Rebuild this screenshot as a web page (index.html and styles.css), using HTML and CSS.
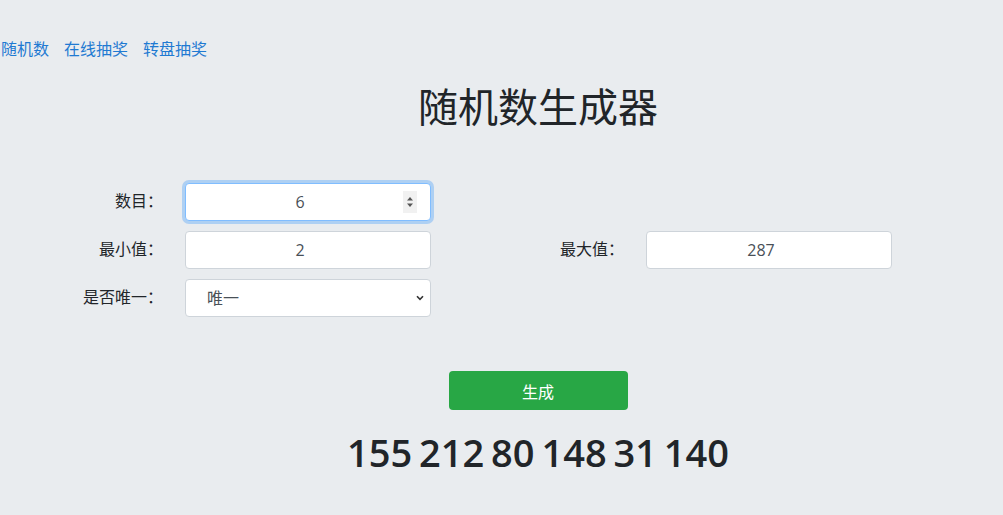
FILE: index.html
```html
<!DOCTYPE html>
<html lang="zh-CN">
<head>
<meta charset="utf-8">
<title>随机数生成器</title>
<link rel="stylesheet" href="styles.css">
</head>
<body>
<div class="page">
  <nav class="nav">
    <a href="#">随机数</a>
    <a href="#">在线抽奖</a>
    <a href="#">转盘抽奖</a>
  </nav>
  <div class="center">
    <h1 class="title">随机数生成器</h1>
  </div>
  <form class="form">
    <label class="label">数目：</label>
    <div class="field">
      <input class="control focus" type="text" value="6">
      <svg class="spin" width="14" height="22" viewBox="0 0 14 22">
        <rect x="0" y="0" width="14" height="22" fill="#f1f1f1"/>
        <path d="M4 9.5 L7 6 L10 9.5 Z" fill="#555"/>
        <path d="M4 12.5 L7 16 L10 12.5 Z" fill="#555"/>
      </svg>
    </div>
    <span></span><span></span>

    <label class="label">最小值：</label>
    <div class="field"><input class="control" type="text" value="2"></div>
    <label class="label">最大值：</label>
    <div class="field"><input class="control" type="text" value="287"></div>

    <label class="label">是否唯一：</label>
    <div class="field">
      <div class="control select">唯一</div>
      <svg class="chev" width="8" height="6" viewBox="0 0 8 6">
        <path d="M1 1.2 L4 4.4 L7 1.2" fill="none" stroke="#333" stroke-width="1.6"/>
      </svg>
    </div>
    <span></span><span></span>
  </form>
  <div class="center">
    <button class="btn" type="button">生成</button>
    <div class="result">155 212 80 148 31 140</div>
  </div>
</div>
</body>
</html>
```

FILE: styles.css
```css
html, body {
  margin: 0;
  padding: 0;
  background: #e9ecef;
}
body {
  font-family: "Open Sans", "Noto Sans CJK SC", sans-serif;
  color: #212529;
  font-size: 16px;
}
.page {
  padding-top: 37px;
}
.nav {
  display: flex;
  gap: 15px;
  padding-left: 1px;
  height: 24px;
  line-height: 24px;
}
.nav a {
  color: #1f7ad2;
  text-decoration: none;
  font-size: 16px;
}
.center {
  padding-left: 73px;
  display: flex;
  flex-direction: column;
  align-items: center;
}
.title {
  margin: 20px 0 0;
  text-align: center;
  font-size: 40px;
  font-weight: 400;
  line-height: 52px;
}
.form {
  margin-top: 50px;
  display: grid;
  grid-template-columns: 170px 246px 185px 246px;
  column-gap: 15px;
  row-gap: 10px;
  grid-auto-rows: 38px;
}
.label {
  text-align: right;
  padding-right: 7px;
  line-height: 36px;
  font-size: 16px;
  color: #212529;
}
.field {
  position: relative;
}
.control {
  box-sizing: border-box;
  width: 246px;
  height: 38px;
  border: 1px solid #ced4da;
  border-radius: 4px;
  background: #fff;
  font-family: "Open Sans", "Noto Sans CJK SC", sans-serif;
  font-size: 16px;
  color: #495057;
  text-align: center;
  padding: 0 28px 0 12px;
  outline: none;
}
.control.focus {
  border-color: #80bdff;
  box-shadow: 0 0 0 3px rgba(0, 123, 255, 0.25);
}
.spin {
  position: absolute;
  left: 218px;
  top: 8px;
}
.select {
  text-align: left;
  padding-left: 21px;
  line-height: 36px;
  color: #495057;
}
.chev {
  position: absolute;
  left: 231px;
  top: 16px;
}
.btn {
  margin-top: 54px;
  width: 179px;
  height: 39px;
  border: none;
  border-radius: 4px;
  background: #28a745;
  color: #fff;
  font-family: "Open Sans", "Noto Sans CJK SC", sans-serif;
  font-size: 16px;
}
.result {
  margin-top: 18px;
  text-align: center;
  font-size: 38px;
  font-weight: 600;
  line-height: 48px;
  word-spacing: -3px;
}
```
